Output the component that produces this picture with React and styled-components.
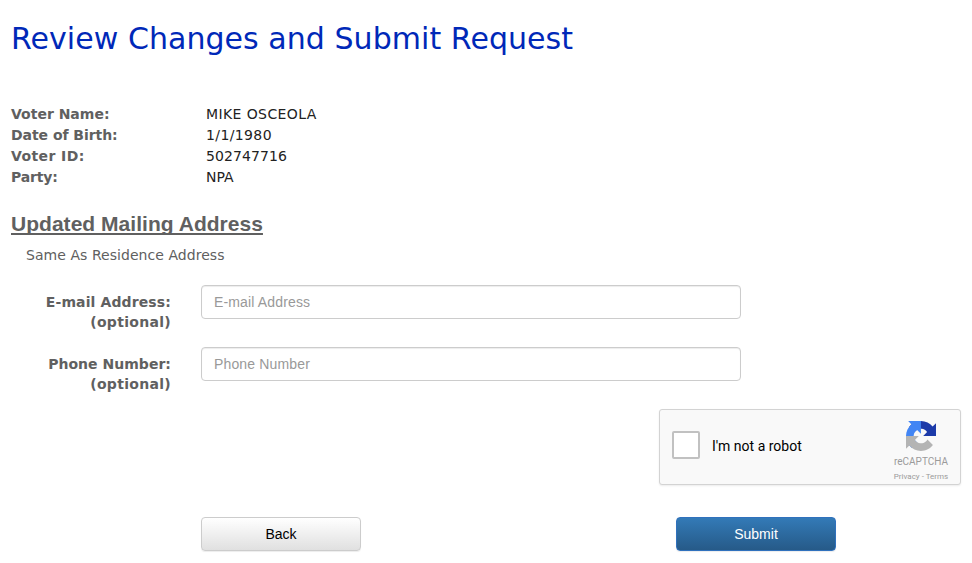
import React from "react";
import styled, { createGlobalStyle } from "styled-components";

const voter = [
  { label: "Voter Name:", value: "MIKE OSCEOLA", valueSpacing: 0.4 },
  { label: "Date of Birth:", value: "1/1/1980", valueSpacing: 0.38, labelSpacing: -0.05 },
  { label: "Voter ID:", value: "502747716", valueSpacing: 0.1, labelSpacing: 0.4 },
  { label: "Party:", value: "NPA", labelSpacing: -0.15 },
];

const fields = [
  { id: "email", label: "E-mail Address:", placeholder: "E-mail Address", spacing: 0.12 },
  { id: "phone", label: "Phone Number:", placeholder: "Phone Number", spacing: 0.03 },
];

function RecaptchaLogo() {
  return (
    <Logo viewBox="0 0 64 64" aria-hidden="true">
      <path
        fill="#1c3aa9"
        d="M64 31.955l-.033-1.37V4.687l-7.16 7.16C50.948 4.674 42.033.093 32.05.093c-10.4 0-19.622 4.96-25.458 12.64l11.736 11.86a15.55 15.55 0 0 1 4.754-5.334c2.05-1.6 4.952-2.906 8.968-2.906.485 0 .86.057 1.135.163 4.976.393 9.288 3.14 11.828 7.124l-8.307 8.307L64 31.953"
      />
      <path
        fill="#4285f4"
        d="M31.862.094l-1.37.033H4.594l7.16 7.16C4.58 13.147 0 22.06 0 32.046c0 10.4 4.96 19.622 12.64 25.458L24.5 45.768a15.55 15.55 0 0 1-5.334-4.754c-1.6-2.05-2.906-4.952-2.906-8.968 0-.485.057-.86.163-1.135.393-4.976 3.14-9.288 7.124-11.828l8.307 8.307L31.86.095"
      />
      <path
        fill="#b4b4b4"
        d="M.001 32.045l.033 1.37v25.898l7.16-7.16c5.86 7.173 14.774 11.754 24.76 11.754 10.4 0 19.622-4.96 25.458-12.64l-11.736-11.86a15.55 15.55 0 0 1-4.754 5.334c-2.05 1.6-4.952 2.906-8.968 2.906-.485 0-.86-.057-1.135-.163-4.976-.393-9.288-3.14-11.828-7.124l8.307-8.307c-10.522.04-22.4.066-27.295-.005"
      />
    </Logo>
  );
}

function Recaptcha() {
  return (
    <CaptchaBox>
      <CaptchaCheck type="checkbox" id="robot" />
      <CaptchaLabel htmlFor="robot">I'm not a robot</CaptchaLabel>
      <CaptchaBrand>
        <RecaptchaLogo />
        <BrandName>reCAPTCHA</BrandName>
        <BrandLinks>Privacy - Terms</BrandLinks>
      </CaptchaBrand>
    </CaptchaBox>
  );
}

function App() {
  return (
    <Page>
      <GlobalStyle />
      <Title>Review Changes and Submit Request</Title>
      <VoterInfo>
        {voter.map((item) => (
          <React.Fragment key={item.label}>
            <InfoLabel $spacing={item.labelSpacing}>{item.label}</InfoLabel>
            <InfoValue $spacing={item.valueSpacing}>{item.value}</InfoValue>
          </React.Fragment>
        ))}
      </VoterInfo>
      <SectionTitle>Updated Mailing Address</SectionTitle>
      <Note>Same As Residence Address</Note>
      {fields.map((field) => (
        <FormRow key={field.id}>
          <FieldLabel htmlFor={field.id} $spacing={field.spacing}>
            {field.label}
            <Optional>(optional)</Optional>
          </FieldLabel>
          <Input id={field.id} placeholder={field.placeholder} />
        </FormRow>
      ))}
      <CaptchaRow>
        <Recaptcha />
      </CaptchaRow>
      <Actions>
        <Button type="button">Back</Button>
        <Button type="button" $primary>
          Submit
        </Button>
      </Actions>
    </Page>
  );
}

export default App;

const GlobalStyle = createGlobalStyle`
  * {
    box-sizing: border-box;
  }

  body {
    margin: 0;
    background: #fff;
    color: #606060;
    font-family: Verdana, "DejaVu Sans", sans-serif;
    font-size: 14px;
    line-height: 20px;
  }
`;

const Page = styled.main`
  width: 972px;
  height: 563px;
  padding: 21px 11px 0;
  overflow: hidden;
`;

const Title = styled.h1`
  margin: 0 0 47px;
  color: #0028b8;
  font-size: 30px;
  font-weight: 400;
  line-height: 36px;
  letter-spacing: 0.05px;
  white-space: nowrap;
`;

const VoterInfo = styled.dl`
  display: grid;
  grid-template-columns: 195px 1fr;
  grid-auto-rows: 21px;
  margin: 0 0 24px;
  line-height: 21px;
`;

const InfoLabel = styled.dt`
  font-weight: 700;
  letter-spacing: ${({ $spacing = 0 }) => $spacing}px;
`;

const InfoValue = styled.dd`
  margin: 0;
  color: #222;
  letter-spacing: ${({ $spacing = 0 }) => $spacing}px;
`;

const SectionTitle = styled.h2`
  margin: 0 0 9px;
  font-family: "Liberation Sans", Arial, sans-serif;
  font-size: 21px;
  line-height: 24px;
  letter-spacing: 0.03px;
  text-decoration: underline;
  text-decoration-skip-ink: none;
`;

const Note = styled.p`
  margin: 0 0 20px 15px;
  letter-spacing: 0.05px;
`;

const FormRow = styled.div`
  display: flex;
  align-items: flex-start;
  gap: 30px;
  height: 47px;
  margin-bottom: 15px;
`;

const FieldLabel = styled.label`
  width: 160px;
  padding-top: 7px;
  font-weight: 700;
  letter-spacing: ${({ $spacing }) => $spacing}px;
  text-align: right;
`;

const Optional = styled.span`
  display: block;
  letter-spacing: 0.3px;
`;

const Input = styled.input`
  width: 540px;
  height: 34px;
  padding: 6px 12px;
  border: 1px solid #ccc;
  border-radius: 4px;
  box-shadow: inset 0 1px 1px rgba(0, 0, 0, 0.075);
  font-family: "Liberation Sans", Arial, sans-serif;
  font-size: 14px;
  letter-spacing: 0.15px;

  &::placeholder {
    color: #999;
    opacity: 1;
  }
`;

const CaptchaRow = styled.div`
  display: flex;
  justify-content: flex-end;
`;

const CaptchaBox = styled.div`
  display: flex;
  align-items: flex-start;
  width: 302px;
  height: 76px;
  border: 1px solid #d3d3d3;
  border-radius: 3px;
  background: #f9f9f9;
  box-shadow: 0 1px 2px rgba(0, 0, 0, 0.08);
  font-family: Roboto, Arial, sans-serif;
`;

const CaptchaCheck = styled.input`
  appearance: none;
  width: 28px;
  height: 28px;
  margin: 21px 12px 0;
  border: 2px solid #c1c1c1;
  border-radius: 2px;
  background: #fff;
`;

const CaptchaLabel = styled.label`
  margin-top: 26px;
  color: #000;
  font-size: 14px;
`;

const CaptchaBrand = styled.div`
  display: flex;
  flex-direction: column;
  align-items: center;
  width: 56px;
  margin: 11px 11px 0 auto;
  color: #9b9b9b;
  white-space: nowrap;
`;

const Logo = styled.svg`
  width: 30px;
  height: 30px;
`;

const BrandName = styled.span`
  margin-top: 5px;
  font-size: 10px;
  line-height: 12px;
`;

const BrandLinks = styled.span`
  margin-top: 4px;
  font-size: 8px;
  line-height: 10px;
`;

const Actions = styled.div`
  display: flex;
  gap: 315px;
  margin: 32px 0 0 190px;
`;

const Button = styled.button`
  width: 160px;
  height: 34px;
  padding: 0;
  border: 1px solid ${({ $primary }) => ($primary ? "#3071bd" : "#ccc")};
  border-radius: 4px;
  background: ${({ $primary }) =>
    $primary
      ? "linear-gradient(#337ab7, #265a88)"
      : "linear-gradient(#fff, #e0e0e0)"};
  box-shadow: 0 1px 1px rgba(0, 0, 0, 0.075);
  color: ${({ $primary }) => ($primary ? "#fff" : "#000")};
  font-family: "Liberation Sans", Arial, sans-serif;
  font-size: 14px;
  line-height: 20px;
`;
